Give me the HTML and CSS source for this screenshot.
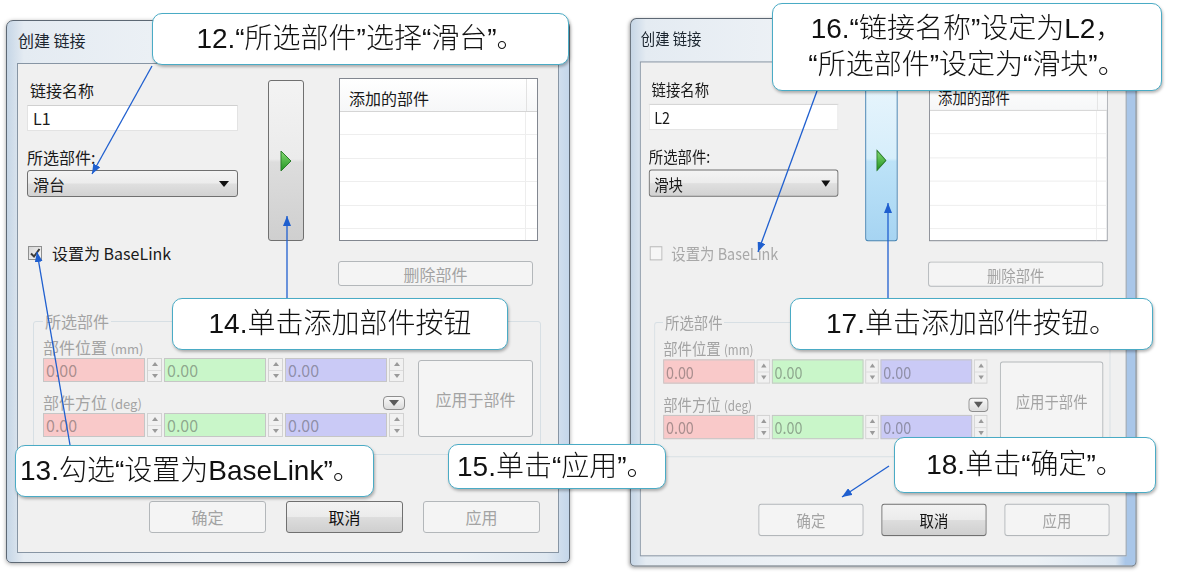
FILE: index.html
```html
<!DOCTYPE html>
<html lang="zh-CN">
<head>
<meta charset="utf-8">
<title>创建 链接</title>
<link rel="stylesheet" href="styles.css">
</head>
<body>
<div class="stage">

  <div class="dialog d1">
    <div class="titlebar">创建 链接</div>
    <div class="client">
      <div class="top">
        <div class="col-left">
          <div class="lbl lbl-name">链接名称</div>
          <div class="input">L1</div>
          <div class="lbl lbl-part">所选部件:</div>
          <div class="combo"><span>滑台</span><i class="caret"></i></div>
          <div class="check-row">
            <span class="cb on"><svg viewBox="0 0 12 12" width="12" height="12"><path d="M2 6.5 L5 9.5 L10.5 2" stroke="#3c3c3c" stroke-width="2" fill="none"/></svg></span>
            <span class="cb-label">设置为 BaseLink</span>
          </div>
        </div>
        <div class="col-mid">
          <div class="add-btn">
            <svg width="12" height="22" viewBox="0 0 12 22"><defs><linearGradient id="ga" x1="0" y1="0" x2="0" y2="1"><stop offset="0" stop-color="#86dc74"/><stop offset="1" stop-color="#1f921f"/></linearGradient></defs><path d="M1 1 L11 11 L1 21 Z" fill="url(#ga)" stroke="#2b7d2b" stroke-width="1"/></svg>
          </div>
        </div>
        <div class="col-right">
          <div class="list">
            <div class="list-head"><span class="hcell">添加的部件</span><span class="hcell2"></span></div>
            <div class="list-body"><div class="row"></div><div class="row"></div><div class="row"></div><div class="row"></div><div class="row"></div></div>
          </div>
          <div class="btn disabled del">删除部件</div>
        </div>
      </div>
      <fieldset class="group">
        <legend>所选部件</legend>
        <div class="group-grid">
          <div class="fields">
            <div class="flabel"><span>部件位置 <small>(mm)</small></span></div>
            <div class="frow">
              <div class="fld pink">0.00</div><div class="spin"><i class="up"></i><i class="dn"></i></div>
              <div class="fld green">0.00</div><div class="spin"><i class="up"></i><i class="dn"></i></div>
              <div class="fld blue">0.00</div><div class="spin"><i class="up"></i><i class="dn"></i></div>
            </div>
            <div class="flabel flabel2"><span>部件方位 <small>(deg)</small></span><span class="mini-dd"></span></div>
            <div class="frow">
              <div class="fld pink">0.00</div><div class="spin"><i class="up"></i><i class="dn"></i></div>
              <div class="fld green">0.00</div><div class="spin"><i class="up"></i><i class="dn"></i></div>
              <div class="fld blue">0.00</div><div class="spin"><i class="up"></i><i class="dn"></i></div>
            </div>
          </div>
          <div class="btn disabled apply-part">应用于部件</div>
        </div>
      </fieldset>
      <div class="actions">
        <div class="btn disabled">确定</div>
        <div class="btn primary">取消</div>
        <div class="btn disabled">应用</div>
      </div>
    </div>
  </div>

  <div class="dialog d2">
    <div class="titlebar">创建 链接</div>
    <div class="client">
      <div class="top">
        <div class="col-left">
          <div class="lbl lbl-name">链接名称</div>
          <div class="input">L2</div>
          <div class="lbl lbl-part">所选部件:</div>
          <div class="combo"><span>滑块</span><i class="caret"></i></div>
          <div class="check-row off">
            <span class="cb"></span>
            <span class="cb-label">设置为 BaseLink</span>
          </div>
        </div>
        <div class="col-mid">
          <div class="add-btn hot">
            <svg width="12" height="22" viewBox="0 0 12 22"><defs><linearGradient id="gb" x1="0" y1="0" x2="0" y2="1"><stop offset="0" stop-color="#86dc74"/><stop offset="1" stop-color="#1f921f"/></linearGradient></defs><path d="M1 1 L11 11 L1 21 Z" fill="url(#gb)" stroke="#2b7d2b" stroke-width="1"/></svg>
          </div>
        </div>
        <div class="col-right">
          <div class="list">
            <div class="list-head"><span class="hcell">添加的部件</span><span class="hcell2"></span></div>
            <div class="list-body"><div class="row"></div><div class="row"></div><div class="row"></div><div class="row"></div><div class="row"></div></div>
          </div>
          <div class="btn disabled del">删除部件</div>
        </div>
      </div>
      <fieldset class="group">
        <legend>所选部件</legend>
        <div class="group-grid">
          <div class="fields">
            <div class="flabel"><span>部件位置 <small>(mm)</small></span></div>
            <div class="frow">
              <div class="fld pink">0.00</div><div class="spin"><i class="up"></i><i class="dn"></i></div>
              <div class="fld green">0.00</div><div class="spin"><i class="up"></i><i class="dn"></i></div>
              <div class="fld blue">0.00</div><div class="spin"><i class="up"></i><i class="dn"></i></div>
            </div>
            <div class="flabel flabel2"><span>部件方位 <small>(deg)</small></span><span class="mini-dd"></span></div>
            <div class="frow">
              <div class="fld pink">0.00</div><div class="spin"><i class="up"></i><i class="dn"></i></div>
              <div class="fld green">0.00</div><div class="spin"><i class="up"></i><i class="dn"></i></div>
              <div class="fld blue">0.00</div><div class="spin"><i class="up"></i><i class="dn"></i></div>
            </div>
          </div>
          <div class="btn disabled apply-part">应用于部件</div>
        </div>
      </fieldset>
      <div class="actions">
        <div class="btn disabled">确定</div>
        <div class="btn primary">取消</div>
        <div class="btn disabled">应用</div>
      </div>
    </div>
  </div>

  <svg class="arrows" width="1177" height="574" viewBox="0 0 1177 574">
    <defs>
      <marker id="ah" viewBox="0 0 10 8" refX="10" refY="4" markerWidth="10" markerHeight="8" markerUnits="userSpaceOnUse" orient="auto">
        <path d="M0 0 L10 4 L0 8 Z" fill="#1f5fcf"/>
      </marker>
    </defs>
    <g stroke="#1f5fcf" stroke-width="1.3" fill="none" marker-end="url(#ah)">
      <path d="M152 66 L92 174"/>
      <path d="M287 298 L287 216"/>
      <path d="M70 445 L37 252"/>
      <path d="M817 91 L758 252"/>
      <path d="M888 298 L888 203"/>
      <path d="M889 466 L842 497"/>
    </g>
  </svg>

  <div class="callout c12">12.“所选部件”选择“滑台”。</div>
  <div class="callout c14">14.单击添加部件按钮</div>
  <div class="callout c13">13.勾选“设置为BaseLink”。</div>
  <div class="callout c15">15.单击“应用”。</div>
  <div class="callout c16"><span>16.“链接名称”设定为L2，</span><span>“所选部件”设定为“滑块”。</span></div>
  <div class="callout c17">17.单击添加部件按钮。</div>
  <div class="callout c18">18.单击“确定”。</div>

</div>
</body>
</html>
```

FILE: styles.css
```css
* { box-sizing: border-box; }
html, body { margin: 0; padding: 0; background: #fff; }

.stage {
  position: relative;
  width: 1177px;
  height: 574px;
  overflow: hidden;
  background: #fff;
  font-family: "Noto Sans CJK SC", "Liberation Sans", sans-serif;
}

/* ---------- window ---------- */
.dialog {
  position: absolute;
  width: 564px;
  height: 543px;
  display: flex;
  flex-direction: column;
  border: 1px solid #5d6874;
  border-radius: 7px 7px 5px 5px;
  background: linear-gradient(90deg, #c6d6e6 0%, #e4ebf2 3%, #eef2f6 35%, #ecf1f5 80%, #dfe8f1 96%, #c4d6ea 100%);
  box-shadow: 0 1px 4px rgba(0, 0, 0, 0.35);
}
.d1 { left: 6px; top: 20px; }
.d2 {
  left: 630px;
  top: 18px;
  transform: scale(0.898, 1.01);
  transform-origin: 0 0;
  background: linear-gradient(90deg, #c6d6e6 0%, #e4ebf2 3%, #eef2f6 35%, #ecf1f5 80%, #dde7f1 96%, #a9c6e8 98%, #a9c6e8 100%);
}

.titlebar {
  flex: none;
  height: 42px;
  padding-left: 11px;
  line-height: 38px;
  font-size: 16px;
  color: #1c2630;
  white-space: nowrap;
}

.client {
  flex: 1;
  margin: 0 10px 9px 10px;
  background: #f0f0f0;
  border: 1px solid #8795a4;
  padding: 14px 0 0 9px;
  display: flex;
  flex-direction: column;
  color: #1a1a1a;
  font-size: 16px;
}

/* ---------- top section ---------- */
.top { display: flex; align-items: flex-start; }
.col-left { width: 211px; display: flex; flex-direction: column; }
.col-mid { width: 36px; margin-left: 30px; }
.col-right { width: 199px; margin-left: 35px; display: flex; flex-direction: column; }

.lbl { height: 20px; line-height: 20px; white-space: nowrap; }
.lbl-name { margin-top: 2px; padding-left: 3px; }
.lbl-part { margin-top: 16px; }

.input {
  margin-top: 5px;
  height: 26px;
  background: #fff;
  border: 1px solid #e3e3e3;
  border-top-color: #d0d0d0;
  padding-left: 5px;
  line-height: 24px;
}

.combo {
  margin-top: 3px;
  height: 27px;
  border: 1px solid #707070;
  border-radius: 3px;
  background: linear-gradient(#f4f4f4, #ececec 48%, #dfdfdf 52%, #d2d2d2);
  display: flex;
  align-items: center;
  justify-content: space-between;
  padding: 0 8px 0 5px;
}
.caret {
  width: 0;
  height: 0;
  border-left: 5px solid transparent;
  border-right: 5px solid transparent;
  border-top: 6px solid #111;
}

.check-row {
  margin-top: 46px;
  height: 20px;
  display: flex;
  align-items: center;
  white-space: nowrap;
}
.cb {
  width: 14px;
  height: 14px;
  margin-left: 1px;
  border: 1px solid #b8b8b8;
  background: #f6f6f6;
  display: flex;
  align-items: center;
  justify-content: center;
}
.cb.on {
  border-color: #8e8f8f;
  background: linear-gradient(135deg, #d6d6d6, #f8f8f8);
}
.cb-label { margin-left: 10px; }
.check-row.off .cb-label { color: #a8a8a8; }

.add-btn {
  margin-top: 2px;
  height: 161px;
  border: 1px solid #707070;
  border-radius: 3px;
  background: linear-gradient(#f3f3f3, #ebebeb 49%, #dddddd 51%, #cfcfcf);
  display: flex;
  align-items: center;
  justify-content: center;
}
.add-btn.hot {
  border-color: #3c7fb1;
  background: linear-gradient(#e8f5fc, #d6eefb 49%, #bde3f8 51%, #a6d4f2);
}

.list {
  height: 163px;
  background: #fff;
  border: 1px solid #828790;
  display: flex;
  flex-direction: column;
}
.list-head {
  flex: none;
  height: 33px;
  display: flex;
  border-bottom: 1px solid #d5d5d5;
  background: linear-gradient(#ffffff, #f6f7f8);
}
.hcell { flex: 1; padding: 9px 0 0 9px; line-height: 20px; white-space: nowrap; }
.hcell2 { width: 11px; border-left: 1px solid #e2e2e2; }
.list-body {
  flex: 1;
  overflow: hidden;
  background: linear-gradient(#ededed, #ededed) no-repeat right 11px top / 1px 100%;
}
.row { height: 23.4px; border-bottom: 1px solid #eeeeee; }

/* ---------- buttons ---------- */
.btn {
  display: flex;
  align-items: center;
  justify-content: center;
  border-radius: 3px;
  white-space: nowrap;
}
.btn.disabled {
  border: 1px solid #b3b7ba;
  background: #f4f4f4;
  color: #a3a3a3;
}
.btn.primary {
  border: 1px solid #707070;
  background: linear-gradient(#f3f3f3, #ebebeb 49%, #dddddd 51%, #cfcfcf);
  color: #111;
}
.del { margin-top: 20px; margin-left: -1px; width: 195px; height: 25px; }

/* ---------- group ---------- */
.group {
  margin: 26px 0 0 6px;
  width: 508px;
  min-width: 0;
  border: 1px solid #d7dfe4;
  border-radius: 3px;
  padding: 8px 8px 17px 9px;
}
.group legend {
  padding: 0 2px;
  font-size: 16px;
  line-height: 18px;
  color: #a3a3a3;
}
.group-grid {
  display: grid;
  grid-template-columns: 362px 115px;
  column-gap: 13px;
  align-items: start;
}
.fields { display: flex; flex-direction: column; }
.flabel {
  height: 20px;
  line-height: 20px;
  color: #a3a3a3;
  display: flex;
  align-items: center;
  white-space: nowrap;
}
.flabel small { font-size: 13px; }
.flabel2 { margin-top: 11px; justify-content: space-between; }
.mini-dd {
  width: 22px;
  height: 14px;
  border: 1px solid #8e8e8e;
  border-radius: 4px;
  background: linear-gradient(#f8f8f8, #dcdcdc);
  display: flex;
  align-items: center;
  justify-content: center;
}
.mini-dd::after {
  content: "";
  border-left: 5px solid transparent;
  border-right: 5px solid transparent;
  border-top: 6px solid #5a5a5a;
}

.frow { display: flex; height: 24px; gap: 2px; }
.fld {
  width: 102px;
  border: 1px solid #c6c6c6;
  padding-left: 2px;
  font-size: 16px;
  line-height: 22px;
  color: rgba(70, 70, 70, 0.45);
}
.pink { background: #f9c9c9; }
.green { background: #c9f6c9; }
.blue { background: #cacaf6; }
.spin {
  width: 15px;
  display: flex;
  flex-direction: column;
  border: 1px solid #d2d2d2;
  background: #f1f1f1;
}
.spin i {
  flex: 1;
  display: flex;
  align-items: center;
  justify-content: center;
}
.spin i.up { border-bottom: 1px solid #dcdcdc; }
.spin i.up::after {
  content: "";
  border-left: 3px solid transparent;
  border-right: 3px solid transparent;
  border-bottom: 4px solid #9a9a9a;
}
.spin i.dn::after {
  content: "";
  border-left: 3px solid transparent;
  border-right: 3px solid transparent;
  border-top: 4px solid #9a9a9a;
}

.apply-part { margin-top: 22px; height: 77px; }

.actions {
  margin-top: 46px;
  display: flex;
  justify-content: flex-end;
  gap: 20px;
  padding-right: 18px;
}
.actions .btn { width: 117px; height: 32px; }

/* ---------- annotations ---------- */
.arrows { position: absolute; left: 0; top: 0; }

.callout {
  position: absolute;
  display: flex;
  flex-direction: column;
  align-items: center;
  justify-content: center;
  background: #fff;
  border: 1.5px solid #4aabc5;
  border-radius: 10px;
  box-shadow: 1px 2px 3px rgba(0, 0, 0, 0.28);
  font-family: "Liberation Sans", "Noto Sans CJK SC", sans-serif;
  font-size: 28px;
  font-weight: 300;
  line-height: 36px;
  color: #111;
  white-space: nowrap;
}
.c12 { left: 152px; top: 13px; width: 417px; height: 52px; }
.c14 { left: 172px; top: 298px; width: 336px; height: 52px; }
.c13 { left: 15px; top: 445px; width: 359px; height: 52px; align-items: flex-start; padding-left: 4px; }
.c15 { left: 448px; top: 444px; width: 218px; height: 45px; align-items: flex-start; padding-left: 8px; }
.c16 { left: 772px; top: 3px; width: 390px; height: 88px; }
.c17 { left: 790px; top: 298px; width: 363px; height: 52px; }
.c18 { left: 894px; top: 437px; width: 262px; height: 56px; }
```
